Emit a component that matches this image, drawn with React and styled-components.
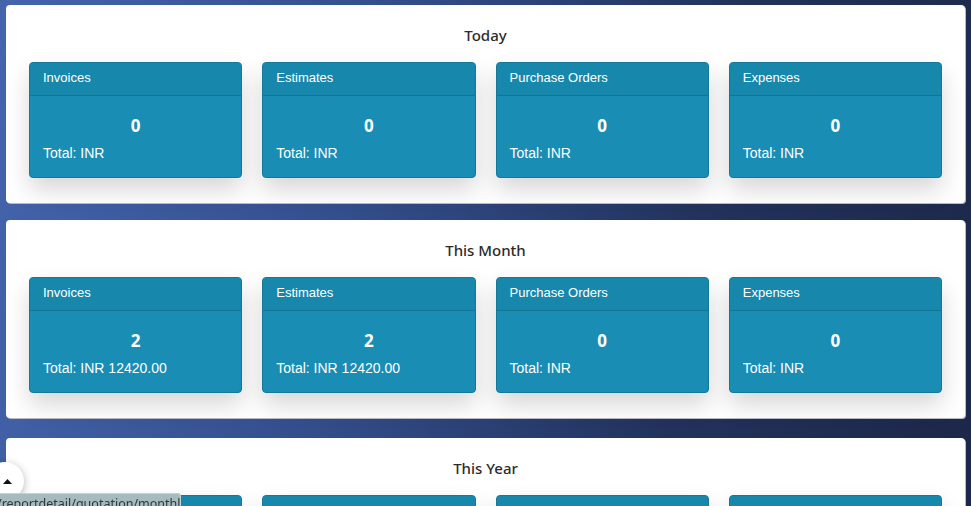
import React from "react";
import styled, { createGlobalStyle } from "styled-components";

const GlobalStyle = createGlobalStyle`
  html, body {
    margin: 0;
    padding: 0;
  }
  body {
    min-height: 100vh;
    background: linear-gradient(100deg, #4464ac 0%, #344f8e 35%, #22325c 70%, #1c2849 100%);
    background-attachment: fixed;
    font-family: "Liberation Sans", Arial, sans-serif;
    overflow: hidden;
  }
`;

const sections = [
  {
    title: "Today",
    stats: [
      { label: "Invoices", count: 0, total: "" },
      { label: "Estimates", count: 0, total: "" },
      { label: "Purchase Orders", count: 0, total: "" },
      { label: "Expenses", count: 0, total: "" },
    ],
  },
  {
    title: "This Month",
    stats: [
      { label: "Invoices", count: 2, total: "12420.00" },
      { label: "Estimates", count: 2, total: "12420.00" },
      { label: "Purchase Orders", count: 0, total: "" },
      { label: "Expenses", count: 0, total: "" },
    ],
  },
  {
    title: "This Year",
    stats: [
      { label: "Invoices", count: 2, total: "12420.00" },
      { label: "Estimates", count: 2, total: "12420.00" },
      { label: "Purchase Orders", count: 0, total: "" },
      { label: "Expenses", count: 0, total: "" },
    ],
  },
];

export default function App() {
  return (
    <>
      <GlobalStyle />
      <Page>
        {sections.map((section) => (
          <Panel key={section.title}>
            <Title>{section.title}</Title>
            <CardGrid>
              {section.stats.map((s) => (
                <Card key={s.label}>
                  <CardHeader>{s.label}</CardHeader>
                  <CardBody>
                    <Count>{s.count}</Count>
                    <Total>Total: INR {s.total}</Total>
                  </CardBody>
                </Card>
              ))}
            </CardGrid>
          </Panel>
        ))}
      </Page>
      <ScrollTop aria-label="Scroll to top">
        <svg width="9" height="5" viewBox="0 0 9 5">
          <path d="M0 5 L4.5 0 L9 5 Z" fill="#111" />
        </svg>
      </ScrollTop>
      <StatusBar>/reportdetail/quotation/monthly</StatusBar>
    </>
  );
}

const Page = styled.main`
  display: flex;
  flex-direction: column;
  gap: 17px;
  padding: 5px 6px 40px;
`;

const Panel = styled.section`
  background: #fff;
  border-radius: 4px;
  box-shadow: 1px 1px 0 #b9bcc4;
  padding: 19px 23px 25px;

  & + & + & {
    margin-top: 3px;
  }
`;

const Title = styled.h2`
  margin: 0 0 16px;
  height: 22px;
  line-height: 22px;
  text-align: center;
  font-family: "Noto Sans", sans-serif;
  font-size: 15px;
  font-weight: 500;
  color: #2b2b2b;
`;

const CardGrid = styled.div`
  display: grid;
  grid-template-columns: repeat(4, 1fr);
  gap: 20px;
`;

const Card = styled.div`
  height: 116px;
  box-sizing: border-box;
  display: flex;
  flex-direction: column;
  background: #198db4;
  border: 1px solid #147899;
  border-radius: 4px;
  box-shadow: 0 12px 24px rgba(0, 0, 0, 0.16);
  color: #fff;
  overflow: hidden;
`;

const CardHeader = styled.div`
  height: 32px;
  line-height: 30px;
  padding: 0 13px;
  background: #1788ab;
  border-bottom: 1px solid #137595;
  font-size: 13px;
`;

const CardBody = styled.div`
  flex: 1;
  padding: 18px 13px 0;
`;

const Count = styled.div`
  text-align: center;
  font-family: "Noto Sans", sans-serif;
  font-weight: 700;
  font-size: 17px;
  line-height: 24px;
`;

const Total = styled.div`
  margin-top: 5px;
  font-size: 14px;
  line-height: 20px;
`;

const ScrollTop = styled.button`
  position: fixed;
  left: -14px;
  bottom: 6px;
  width: 38px;
  height: 38px;
  border: none;
  border-radius: 50%;
  background: #fff;
  box-shadow: 0 2px 8px rgba(0, 0, 0, 0.3);
  display: flex;
  align-items: center;
  justify-content: flex-end;
  padding: 0 12px 0 0;
`;

const StatusBar = styled.div`
  position: fixed;
  left: 0;
  bottom: -10px;
  width: 176px;
  height: 21px;
  padding: 0 4px 0 0;
  background: #a5bbbd;
  border: 1px solid #c4d2d3;
  border-left: none;
  border-radius: 0 3px 0 0;
  font-family: "Noto Sans", sans-serif;
  font-size: 12.5px;
  line-height: 20px;
  color: #2a3a3c;
  white-space: nowrap;
  overflow: hidden;
  text-indent: -3px;
`;
